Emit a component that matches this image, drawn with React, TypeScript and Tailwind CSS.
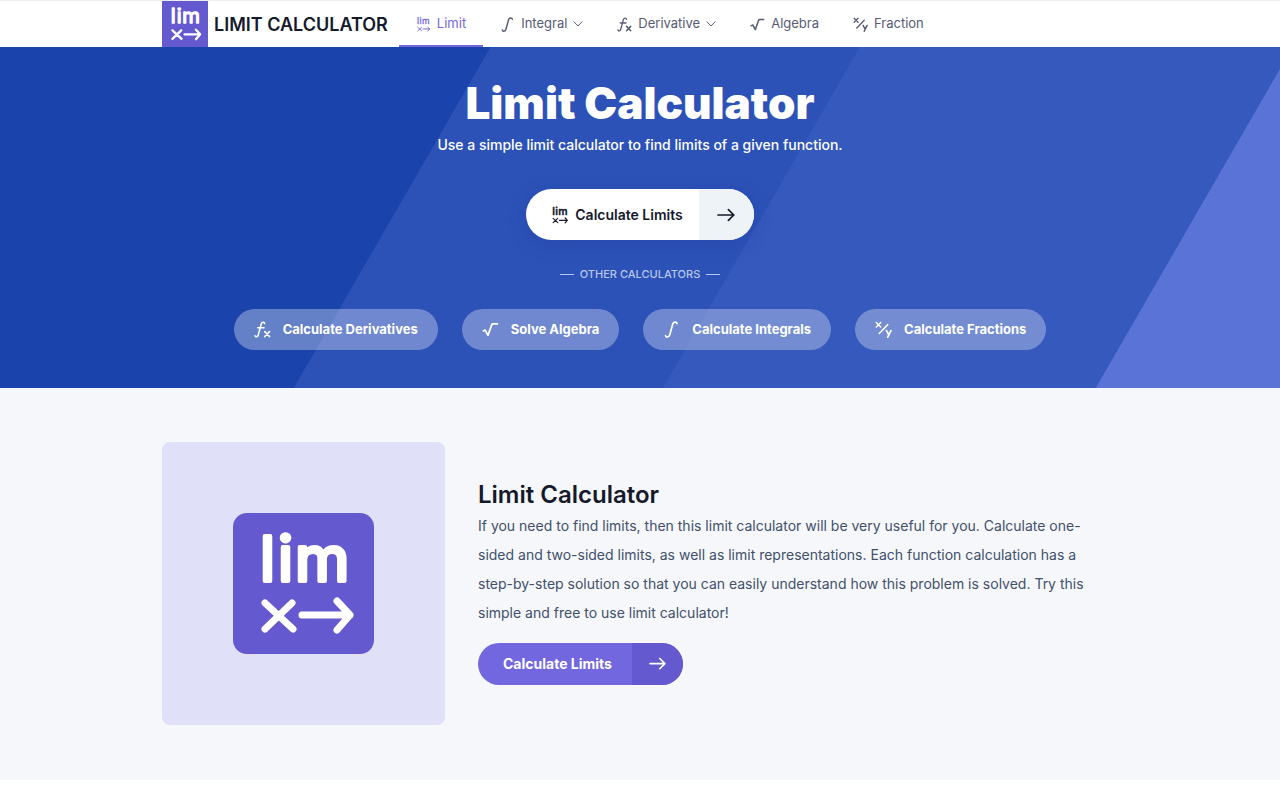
import React from 'react';

type IconName = 'limit' | 'integral' | 'derivative' | 'algebra' | 'fraction';

interface NavItem {
  label: string;
  icon: IconName;
  active?: boolean;
  hasMenu?: boolean;
}

interface Calculator {
  label: string;
  icon: IconName;
}

const navItems: NavItem[] = [
  { label: 'Limit', icon: 'limit', active: true },
  { label: 'Integral', icon: 'integral', hasMenu: true },
  { label: 'Derivative', icon: 'derivative', hasMenu: true },
  { label: 'Algebra', icon: 'algebra' },
  { label: 'Fraction', icon: 'fraction' },
];

const calculators: Calculator[] = [
  { label: 'Calculate Derivatives', icon: 'derivative' },
  { label: 'Solve Algebra', icon: 'algebra' },
  { label: 'Calculate Integrals', icon: 'integral' },
  { label: 'Calculate Fractions', icon: 'fraction' },
];

const LimitMark = ({ outline }: { outline: number }) => (
  <g
    fill="currentColor"
    stroke="currentColor"
    strokeLinecap="round"
    strokeLinejoin="round"
  >
    <text
      x="27 45 62"
      y="68"
      fontSize="62"
      strokeWidth={outline}
      fontFamily="Inter, sans-serif"
    >
      lim
    </text>
    <path
      d="M32 90l28 26M59 90L32 116M69 102h48M104 88l13 14-13 15"
      fill="none"
      strokeWidth="7"
    />
  </g>
);

const Logo = ({ className }: { className: string }) => (
  <svg viewBox="0 0 141 141" className={className} aria-hidden="true">
    <LimitMark outline={4} />
  </svg>
);

const Arrow = ({ className }: { className: string }) => (
  <svg
    viewBox="0 0 18 14"
    className={className}
    fill="none"
    stroke="currentColor"
    strokeWidth="1.7"
    strokeLinecap="round"
    strokeLinejoin="round"
    aria-hidden="true"
  >
    <path d="M1 7h15.8M11.4 1.6L16.8 7l-5.4 5.4" />
  </svg>
);

const MathIcon = ({ name, className }: { name: IconName; className: string }) => {
  if (name === 'limit') {
    return (
      <svg viewBox="24 16 98 108" className={className} aria-hidden="true">
        <LimitMark outline={2} />
      </svg>
    );
  }

  return (
    <svg
      viewBox="0 0 16 16"
      className={className}
      fill="none"
      stroke="currentColor"
      strokeWidth="1.6"
      strokeLinecap="round"
      strokeLinejoin="round"
      aria-hidden="true"
    >
      {name === 'integral' && (
        <path d="M2.4 13.8c.2 1.8 3.2 1.8 3.9-.6l2.9-10.4c.6-2.3 3.7-2.4 4-.4" />
      )}
      {name === 'derivative' && (
        <>
          <path
            d="M1 13.8c.2 1.6 2.5 1.5 3-.6L6.7 3c.6-2.2 3-2.4 3.4-.6M3.5 6.4h6"
            strokeWidth="1.4"
          />
          <path d="M10.2 10l4.4 4.6M14.6 10l-4.4 4.6" />
        </>
      )}
      {name === 'algebra' && (
        <path d="M1.2 9.4l1.8-.9 2.6 5L9.2 3.4c.2-.5.5-.7 1-.7h4.4" />
      )}
      {name === 'fraction' && (
        <>
          <path d="M1.2 1.4l4.2 4.2M5.4 1.4L1.2 5.6M12 3.4l-8 8.4" strokeWidth="1.4" />
          <path d="M10.8 9l2 3.7M15 9l-3 6.2" />
        </>
      )}
    </svg>
  );
};

const Header = () => (
  <header className="border-t border-[#ececec] bg-white">
    <div className="mx-auto flex h-[46px] max-w-[956px] items-stretch">
      <a href="#" className="flex items-center gap-1.5 text-[#15192c]">
        <span className="h-full bg-[#6459cf] text-white">
          <Logo className="size-[46px]" />
        </span>
        <span className="text-[18px] font-semibold whitespace-nowrap">
          LIMIT CALCULATOR
        </span>
      </a>
      <nav className="ml-[11px] flex">
        {navItems.map((item) => (
          <a
            key={item.label}
            href="#"
            className={`flex items-center gap-1.5 border-y-2 border-t-transparent px-[17px] text-[13px] ${item.active ? 'border-b-[#7367df] text-[#7367df]' : 'border-b-transparent text-[#565b73]'}`}
          >
            <MathIcon name={item.icon} className="size-[15px]" />
            {item.label}
            {item.hasMenu && (
              <svg
                viewBox="0 0 10 6"
                className="w-2.5"
                fill="none"
                stroke="currentColor"
                strokeLinecap="round"
                aria-hidden="true"
              >
                <path d="M1 .8l4 4.2 4-4.2" />
              </svg>
            )}
          </a>
        ))}
      </nav>
    </div>
  </header>
);

const Hero = () => (
  <section className="bg-[linear-gradient(120deg,#1a44ab_33.2%,#2c52b8_33.25%,#2c52b8_58.2%,#3559bd_58.25%,#3559bd_87.5%,#5974d6_87.55%)] px-4 pt-8 pb-[38px] text-center text-white">
    <h1 className="text-[44px] leading-[48px] font-black">Limit Calculator</h1>
    <p className="mt-1.5 text-[14px] leading-6 font-medium">
      Use a simple limit calculator to find limits of a given function.
    </p>
    <button
      type="button"
      className="mx-auto mt-8 flex h-[51px] items-stretch overflow-hidden rounded-full bg-white text-[#15192c] shadow-[0_4px_20px_rgba(20,40,120,0.18)]"
    >
      <span className="flex items-center gap-1.5 pr-4 pl-[25px] text-[14px] font-semibold">
        <MathIcon name="limit" className="size-[18px]" />
        Calculate Limits
      </span>
      <span className="flex w-[55px] items-center justify-center bg-[#eef3f8]">
        <Arrow className="w-[18px]" />
      </span>
    </button>
    <div className="mt-[26px] flex items-center justify-center gap-1.5 text-[11px] leading-4 font-medium text-[#b8c6ea]">
      <span className="h-px w-3.5 bg-[#b8c6ea]" />
      OTHER CALCULATORS
      <span className="h-px w-3.5 bg-[#b8c6ea]" />
    </div>
    <div className="mt-[27px] flex flex-wrap justify-center gap-6">
      {calculators.map((calculator) => (
        <a
          key={calculator.label}
          href="#"
          className="flex h-[41px] items-center gap-3 rounded-full bg-[#dee2f5]/38 px-5 text-[13px] font-bold"
        >
          <MathIcon name={calculator.icon} className="size-[17px]" />
          {calculator.label}
        </a>
      ))}
    </div>
  </section>
);

const About = () => (
  <section className="bg-[#f5f7fb] pt-[54px] pb-[55px]">
    <div className="mx-auto flex max-w-[956px] items-center gap-[33px]">
      <div className="flex size-[283px] shrink-0 items-center justify-center rounded-lg bg-[#e0e0f8]">
        <div className="rounded-[14px] bg-[#6459cf] text-white">
          <Logo className="size-[141px]" />
        </div>
      </div>
      <div className="max-w-[620px] min-w-0 flex-1 pb-1">
        <h2 className="text-[24px] leading-8 font-semibold text-[#15192c]">
          Limit Calculator
        </h2>
        <p className="text-[14px] leading-[29px] text-[#42506a]">
          If you need to find limits, then this limit calculator will be very
          useful for you. Calculate one-sided and two-sided limits, as well as
          limit representations. Each function calculation has a step-by-step
          solution so that you can easily understand how this problem is
          solved. Try this simple and free to use limit calculator!
        </p>
        <button
          type="button"
          className="mt-4 flex h-[42px] items-stretch overflow-hidden rounded-full bg-[#7367df] text-white"
        >
          <span className="flex items-center pr-5 pl-[25px] text-[14px] font-bold">
            Calculate Limits
          </span>
          <span className="flex w-[51px] items-center justify-center bg-[#6459cf]">
            <Arrow className="w-[17px]" />
          </span>
        </button>
      </div>
    </div>
  </section>
);

const App = () => (
  <div className="bg-white font-[Inter,sans-serif]">
    <Header />
    <main>
      <Hero />
      <About />
    </main>
  </div>
);

export default App;
